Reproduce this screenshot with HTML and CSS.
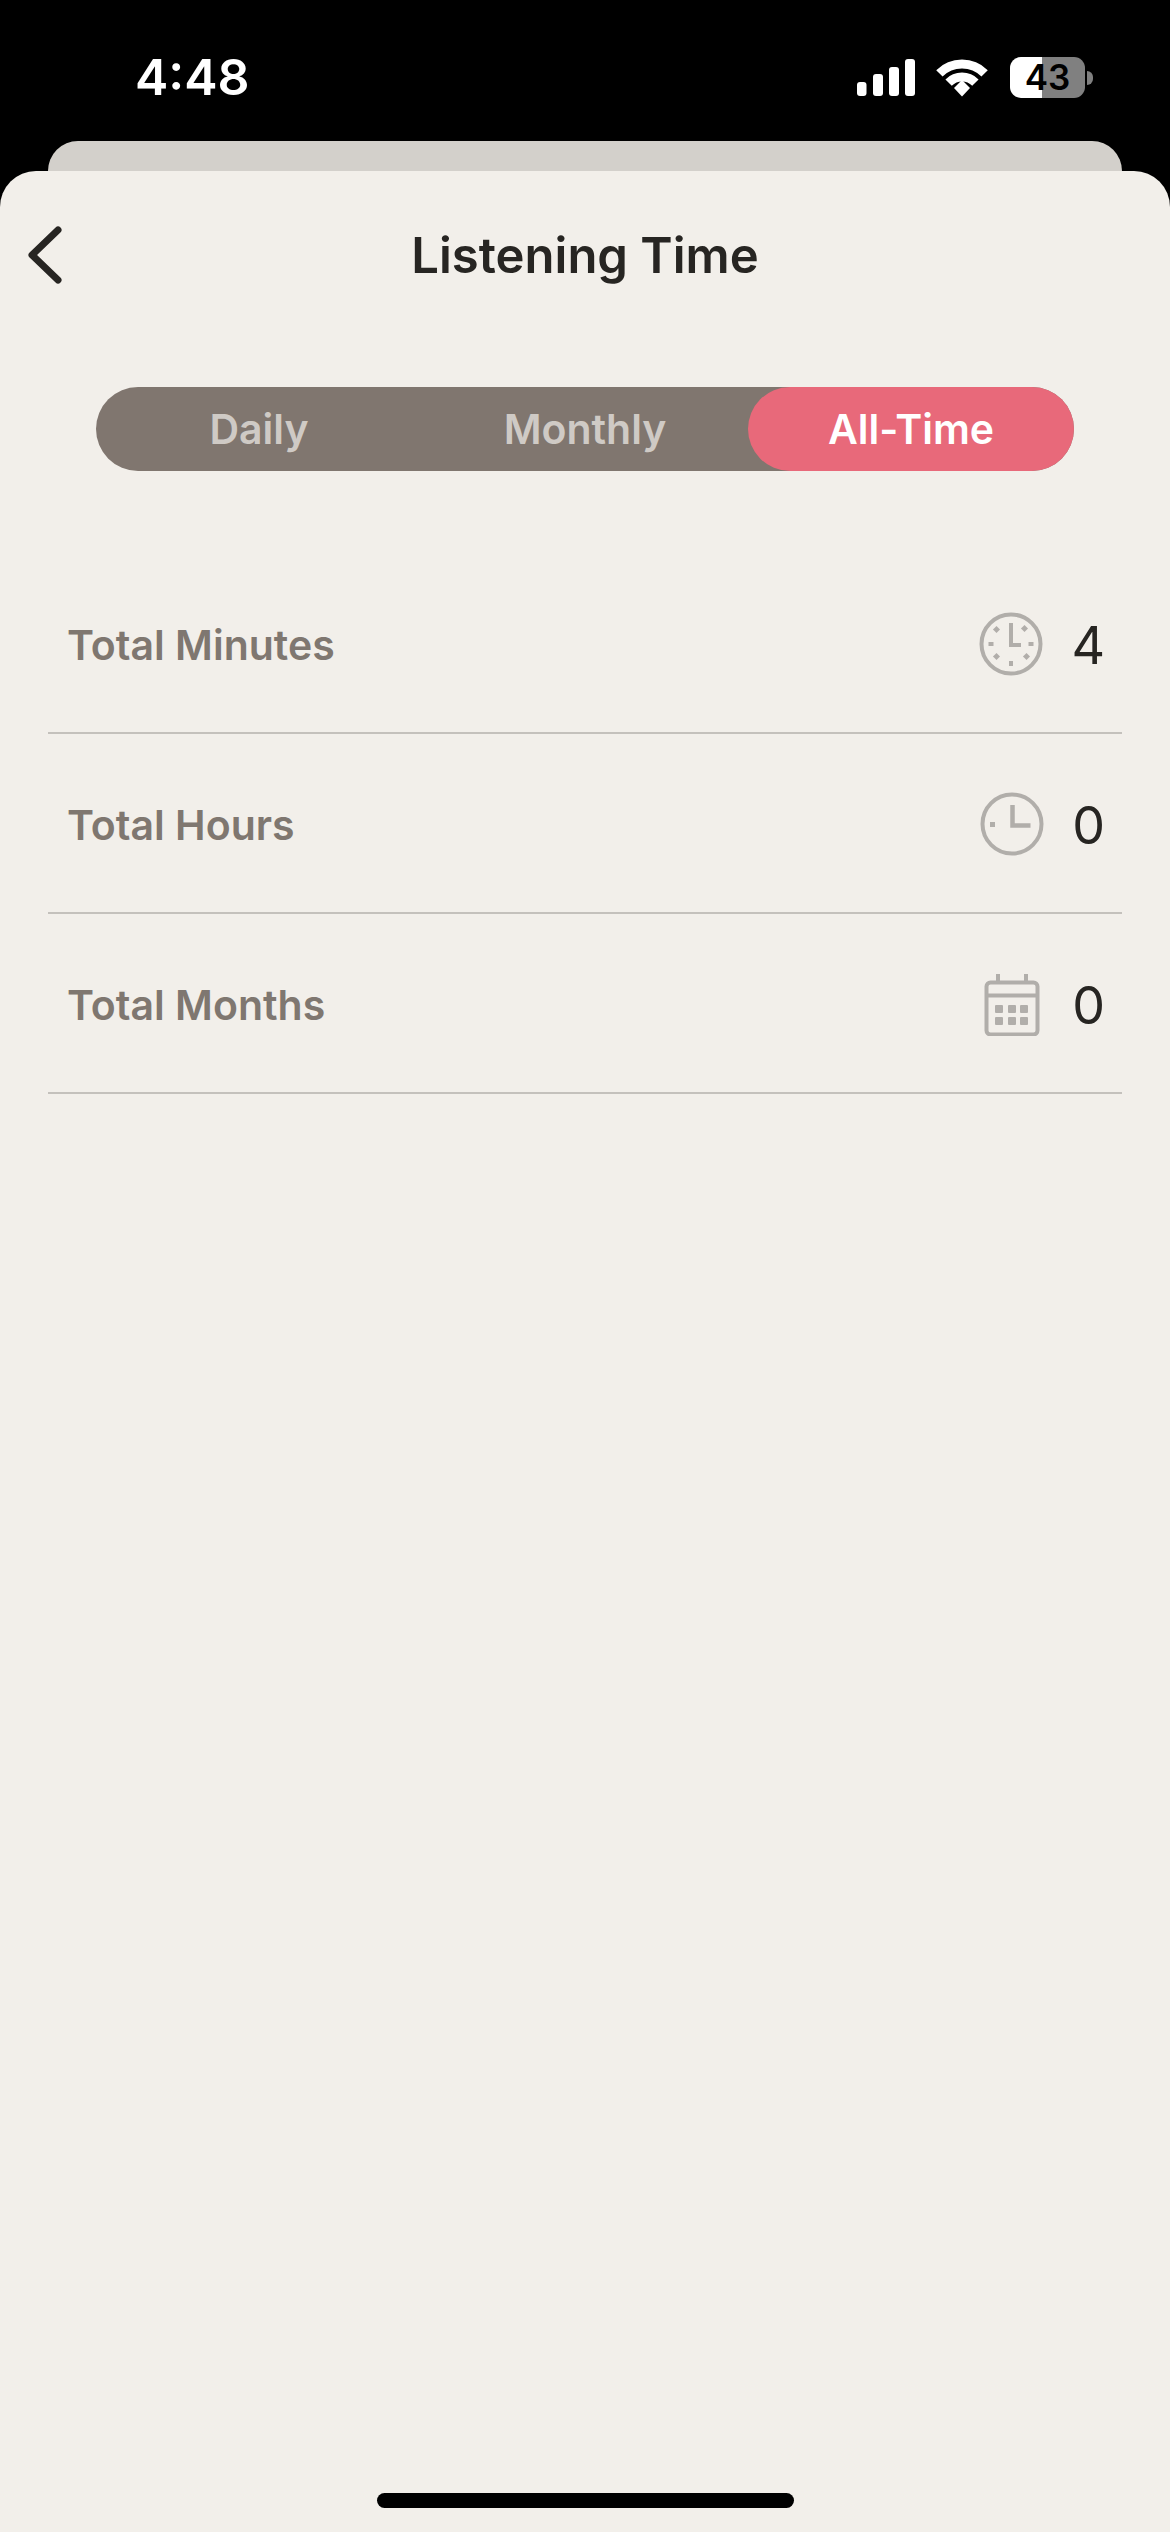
FILE: index.html
```html
<!DOCTYPE html>
<html lang="en">
<head>
    <meta charset="UTF-8">
    <meta name="viewport" content="width=device-width, initial-scale=1.0">
    <title>Listening Time</title>
    <link rel="stylesheet" href="styles.css">
</head>
<body>
    <div class="status-bar">
        <span class="time">4:48</span>
        <div class="status-icons">
            <svg class="signal" width="58" height="37" viewBox="0 0 58 37" fill="#fff">
                <rect x="0" y="23" width="9.500" height="14" rx="3"/>
                <rect x="16" y="15" width="10" height="22" rx="3"/>
                <rect x="32" y="8" width="10" height="29" rx="3"/>
                <rect x="48" y="0" width="10" height="37" rx="3"/>
            </svg>
            <svg class="wifi" width="52" height="38" viewBox="0 0 52 38" fill="none" stroke="#fff" stroke-width="9">
                <path d="M3.400 14.400a32 32 0 0 1 45.200 0"/>
                <path d="M12.600 23.600a19 19 0 0 1 26.800 0"/>
                <path d="M18 29l8-8 8 8-8 8.500z" fill="#fff" stroke="none"/>
            </svg>
            <div class="battery">
                <div class="battery-body">43</div>
                <div class="battery-nub"></div>
            </div>
        </div>
    </div>

    <div class="back-card"></div>

    <div class="sheet">
        <div class="header">
            <svg class="back" width="34" height="58" viewBox="0 0 34 58" fill="none" stroke="#272522" stroke-width="7" stroke-linecap="round" stroke-linejoin="round">
                <path d="M30 4L4 29l26 25"/>
            </svg>
            <h1 class="title">Listening Time</h1>
        </div>

        <div class="tabs">
            <div class="tab">Daily</div>
            <div class="tab">Monthly</div>
            <div class="tab active">All-Time</div>
        </div>

        <div class="stats">
            <div class="row">
                <span class="label">Total Minutes</span>
                <div class="row-right">
                    <svg class="icon" width="64" height="64" viewBox="0 0 64 64" fill="none" stroke="#b1aeaa" stroke-width="4">
                        <circle cx="32" cy="32" r="29.500"/>
                        <path d="M32 11v22h10"/>
                        <g fill="#b1aeaa" stroke="none">
                            <rect x="43" y="14" width="5" height="5" transform="rotate(45 45.500 16.500)"/>
                            <rect x="49.500" y="30" width="5" height="4"/>
                            <rect x="45" y="42" width="5" height="5" transform="rotate(45 47.500 44.500)"/>
                            <rect x="30" y="49" width="4" height="5"/>
                            <rect x="15" y="42" width="5" height="5" transform="rotate(45 17.500 44.500)"/>
                            <rect x="9.500" y="30" width="5" height="4"/>
                            <rect x="15" y="15" width="5" height="5" transform="rotate(45 17.500 17.500)"/>
                        </g>
                    </svg>
                    <span class="value">4</span>
                </div>
            </div>
            <div class="row">
                <span class="label">Total Hours</span>
                <div class="row-right">
                    <svg class="icon" width="64" height="64" viewBox="0 0 64 64" fill="none" stroke="#b1aeaa" stroke-width="4">
                        <circle cx="32" cy="32" r="29.500"/>
                        <path d="M32.500 13v20.500h18" stroke-width="4.500"/>
                        <rect x="10" y="30" width="5" height="5" fill="#b1aeaa" stroke="none"/>
                    </svg>
                    <span class="value">0</span>
                </div>
            </div>
            <div class="row">
                <span class="label">Total Months</span>
                <div class="row-right">
                    <svg class="icon" width="64" height="64" viewBox="0 0 64 64" fill="none" stroke="#b1aeaa" stroke-width="4">
                        <rect x="6.500" y="10.500" width="51" height="52" rx="4"/>
                        <path d="M6.500 23.500h51M18 2v8M46 2v8"/>
                        <g fill="#b1aeaa" stroke="none">
                            <rect x="15" y="33" width="8" height="8" rx="1"/>
                            <rect x="28" y="33" width="8" height="8" rx="1"/>
                            <rect x="40" y="33" width="8" height="8" rx="1"/>
                            <rect x="15" y="45" width="8" height="8" rx="1"/>
                            <rect x="28" y="45" width="8" height="8" rx="1"/>
                            <rect x="40" y="45" width="8" height="8" rx="1"/>
                        </g>
                    </svg>
                    <span class="value">0</span>
                </div>
            </div>
        </div>

        <div class="home-indicator"></div>
    </div>
</body>
</html>
```

FILE: styles.css
```css
* {
    box-sizing: border-box;
}

body {
    margin: 0;
    width: 1170px;
    height: 2532px;
    display: flex;
    flex-direction: column;
    background-color: #000;
    font-family: Inter, "Liberation Sans", sans-serif;
    overflow: hidden;
}

.status-bar {
    height: 141px;
    flex: none;
    display: flex;
    justify-content: space-between;
    align-items: flex-start;
    padding: 47px 77px 0 135px;
    color: #fff;
}

.time {
    font-size: 50px;
    font-weight: 600;
    line-height: 60px;
}

.status-icons {
    display: flex;
    align-items: flex-start;
    margin-top: 10px;
}

.signal {
    margin-right: 21px;
    margin-top: 2px;
}

.wifi {
    margin-right: 22px;
    margin-top: 2px;
}

.battery {
    display: flex;
    align-items: center;
}

.battery-body {
    width: 75px;
    height: 41px;
    border-radius: 11px;
    background: linear-gradient(to right, #fff 32px, #808080 32px);
    color: #000;
    font-size: 35px;
    font-weight: 600;
    line-height: 41px;
    text-align: center;
}

.battery-nub {
    width: 6px;
    height: 14px;
    margin-left: 2px;
    border-radius: 0 7px 7px 0;
    background-color: #808080;
}

.back-card {
    height: 30px;
    flex: none;
    margin: 0 48px;
    border-radius: 30px 30px 0 0;
    background-color: #d3d0cb;
}

.sheet {
    flex: 1;
    display: flex;
    flex-direction: column;
    border-radius: 36px 36px 0 0;
    background-color: #f2efea;
}

.header {
    position: relative;
    height: 168px;
    flex: none;
    display: flex;
    align-items: center;
    justify-content: center;
}

.back {
    position: absolute;
    left: 28px;
    top: 55px;
}

.title {
    margin: 0;
    font-size: 49px;
    font-weight: 600;
    color: #272522;
}

.tabs {
    display: grid;
    grid-template-columns: repeat(3, 1fr);
    height: 84px;
    flex: none;
    margin: 48px 96px 0;
    border-radius: 42px;
    background-color: #80766f;
}

.tab {
    display: flex;
    align-items: center;
    justify-content: center;
    border-radius: 42px;
    font-size: 41px;
    font-weight: 600;
    color: #cfcac5;
}

.tab.active {
    background-color: #e8697a;
    color: #fff;
}

.stats {
    margin: 83px 48px 0;
}

.row {
    height: 180px;
    display: flex;
    align-items: center;
    justify-content: space-between;
    padding: 0 17px 0 19px;
    border-bottom: 2px solid #c4c1bc;
}

.label {
    padding-top: 3px;
    font-size: 41px;
    font-weight: 600;
    color: #7f7770;
}

.row-right {
    display: flex;
    align-items: center;
    gap: 28px;
}

.value {
    padding-top: 5px;
    font-size: 52px;
    color: #272522;
}

.icon {
    margin-top: 2px;
}

.home-indicator {
    width: 417px;
    height: 15px;
    flex: none;
    margin: auto auto 24px;
    border-radius: 8px;
    background-color: #000;
}
```
